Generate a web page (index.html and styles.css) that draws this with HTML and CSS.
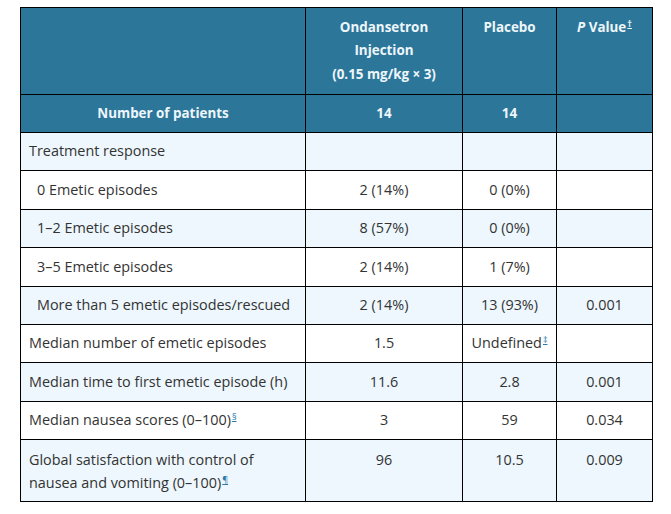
FILE: index.html
```html
<!DOCTYPE html>
<html>
<head>
<meta charset="utf-8">
<link rel="stylesheet" href="styles.css">
</head>
<body>
<table class="data">
  <colgroup>
    <col class="c1"><col class="c2"><col class="c3"><col class="c4">
  </colgroup>
  <thead>
    <tr class="head top">
      <th></th>
      <th>Ondansetron<br>Injection<br>(0.15 mg/kg × 3)</th>
      <th>Placebo</th>
      <th><i>P</i> Value<sup><a href="#">†</a></sup></th>
    </tr>
    <tr class="head count">
      <th>Number of patients</th>
      <th>14</th>
      <th>14</th>
      <th></th>
    </tr>
  </thead>
  <tbody>
    <tr class="alt"><td>Treatment response</td><td></td><td></td><td></td></tr>
    <tr><td><span class="ind">0 Emetic episodes</span></td><td>2 (14%)</td><td>0 (0%)</td><td></td></tr>
    <tr class="alt"><td><span class="ind">1–2 Emetic episodes</span></td><td>8 (57%)</td><td>0 (0%)</td><td></td></tr>
    <tr><td><span class="ind">3–5 Emetic episodes</span></td><td>2 (14%)</td><td>1 (7%)</td><td></td></tr>
    <tr class="alt"><td><span class="ind">More than 5 emetic episodes/rescued</span></td><td>2 (14%)</td><td>13 (93%)</td><td>0.001</td></tr>
    <tr><td>Median number of emetic episodes</td><td>1.5</td><td>Undefined<sup><a href="#">‡</a></sup></td><td></td></tr>
    <tr class="alt"><td>Median time to first emetic episode (h)</td><td>11.6</td><td>2.8</td><td>0.001</td></tr>
    <tr><td>Median nausea scores (0–100)<sup><a href="#">§</a></sup></td><td>3</td><td>59</td><td>0.034</td></tr>
    <tr class="alt last"><td>Global satisfaction with control of<br>nausea and vomiting (0–100)<sup><a href="#">¶</a></sup></td><td>96</td><td>10.5</td><td>0.009</td></tr>
  </tbody>
</table>
</body>
</html>
```
FILE: styles.css
```css
html, body {
  margin: 0;
  padding: 0;
  background: #ffffff;
}
body {
  padding: 7px 0 0 20px;
  font-family: "Open Sans", "Noto Sans", sans-serif;
  font-size: 14.4px;
  color: #333333;
}
.data {
  border-collapse: collapse;
  table-layout: fixed;
  width: 632px;
}
.c1 { width: 285px; }
.c2 { width: 157px; }
.c3 { width: 94px; }
.c4 { width: 96px; }
.data th, .data td {
  border: 1px solid #000000;
  padding: 7.5px 8px;
  line-height: 22.4px;
  vertical-align: top;
  text-align: center;
}
.head th {
  background: #2c7699;
  color: #eef6fb;
  font-weight: 700;
  font-size: 13.4px;
}
.head.top th {
  line-height: 23.5px;
}
.data tr.last td {
  line-height: 23px;
}
.data td:first-child {
  text-align: left;
}
.data tr.alt td {
  background: #edf7fd;
}
.ind {
  padding-left: 8px;
}
sup {
  font-size: 9px;
  line-height: 9px;
  vertical-align: 5px;
  margin-left: 1px;
}
sup a {
  color: #2c7aa8;
}
.head sup a {
  color: #eef6fb;
}
```
